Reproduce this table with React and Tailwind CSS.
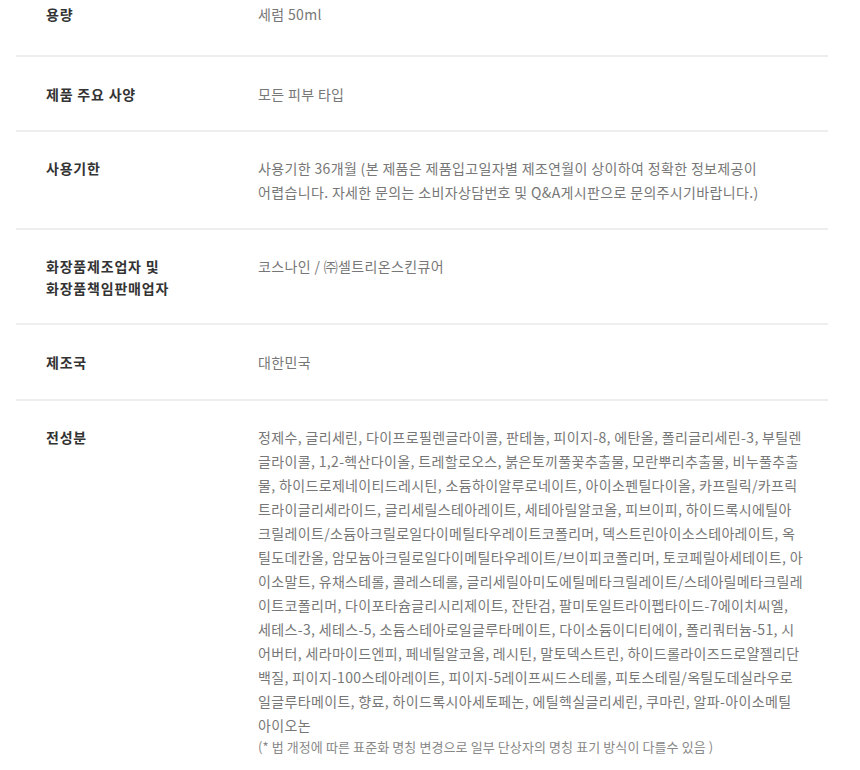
import React from "react";

// lines broken exactly as on the product page
const ingredientLines = [
  "정제수, 글리세린, 다이프로필렌글라이콜, 판테놀, 피이지-8, 에탄올, 폴리글리세린-3, 부틸렌",
  "글라이콜, 1,2-헥산다이올, 트레할로오스, 붉은토끼풀꽃추출물, 모란뿌리추출물, 비누풀추출",
  "물, 하이드로제네이티드레시틴, 소듐하이알루로네이트, 아이소펜틸다이올, 카프릴릭/카프릭",
  "트라이글리세라이드, 글리세릴스테아레이트, 세테아릴알코올, 피브이피, 하이드록시에틸아",
  "크릴레이트/소듐아크릴로일다이메틸타우레이트코폴리머, 덱스트린아이소스테아레이트, 옥",
  "틸도데칸올, 암모늄아크릴로일다이메틸타우레이트/브이피코폴리머, 토코페릴아세테이트, 아",
  "이소말트, 유채스테롤, 콜레스테롤, 글리세릴아미도에틸메타크릴레이트/스테아릴메타크릴레",
  "이트코폴리머, 다이포타슘글리시리제이트, 잔탄검, 팔미토일트라이펩타이드-7에이치씨엘,",
  "세테스-3, 세테스-5, 소듐스테아로일글루타메이트, 다이소듐이디티에이, 폴리쿼터늄-51, 시",
  "어버터, 세라마이드엔피, 페네틸알코올, 레시틴, 말토덱스트린, 하이드롤라이즈드로얄젤리단",
  "백질, 피이지-100스테아레이트, 피이지-5레이프씨드스테롤, 피토스테릴/옥틸도데실라우로",
  "일글루타메이트, 향료, 하이드록시아세토페논, 에틸헥실글리세린, 쿠마린, 알파-아이소메틸",
  "아이오논",
];

const rows = [
  { label: "제품 주요 사양", value: ["모든 피부 타입"], pad: "pt-[25px] pb-[24px]" },
  {
    label: "사용기한",
    value: [
      "사용기한 36개월 (본 제품은 제품입고일자별 제조연월이 상이하여 정확한 정보제공이",
      "어렵습니다. 자세한 문의는 소비자상담번호 및 Q&A게시판으로 문의주시기바랍니다.)",
    ],
    pad: "pt-[24px] pb-[24px]",
  },
  {
    label: "화장품제조업자 및\n화장품책임판매업자",
    value: ["코스나인 / ㈜셀트리온스킨큐어"],
    pad: "pt-[24px] pb-[24px]",
  },
  { label: "제조국", value: ["대한민국"], pad: "pt-[25px] pb-[25px]" },
];

const Label = ({ children }) => (
  <div className="w-[242px] shrink-0 pl-[30px] pt-px text-[14px] leading-[22px] font-bold tracking-[0.8px] text-[#333] whitespace-pre-line">
    {children}
  </div>
);

const Lines = ({ lines }) => (
  <div className="flex-1 pr-4 text-[14px] leading-6 tracking-[0.35px] text-[#777]">
    {lines.map((line, i) => (
      <span key={i} className="block whitespace-nowrap">
        {line}
      </span>
    ))}
  </div>
);

const Row = ({ label, lines, className = "" }) => (
  <div className={`flex border-b-2 border-[#eeeeee] ${className}`}>
    <Label>{label}</Label>
    <Lines lines={lines} />
  </div>
);

export default function App() {
  return (
    <div
      className="bg-white w-[860px] h-[770px] overflow-hidden px-4"
      style={{ fontFamily: '"Noto Sans CJK KR", "Noto Sans", sans-serif' }}
    >
      <div className="w-[812px]">
        <Row label="용량" lines={["세럼 50ml"]} className="pt-[2px] pb-[29px]" />
        {rows.map((row, i) => (
          <Row key={i} label={row.label} lines={row.value} className={row.pad} />
        ))}
        <div className="flex pt-[24px]">
          <Label>전성분</Label>
          <div className="flex-1">
            <Lines lines={ingredientLines} />
            <p className="mt-[2px] text-[13px] leading-4 tracking-[0.1px] text-[#888]">
              (* 법 개정에 따른 표준화 명칭 변경으로 일부 단상자의 명칭 표기 방식이 다를수 있음 )
            </p>
          </div>
        </div>
      </div>
    </div>
  );
}
